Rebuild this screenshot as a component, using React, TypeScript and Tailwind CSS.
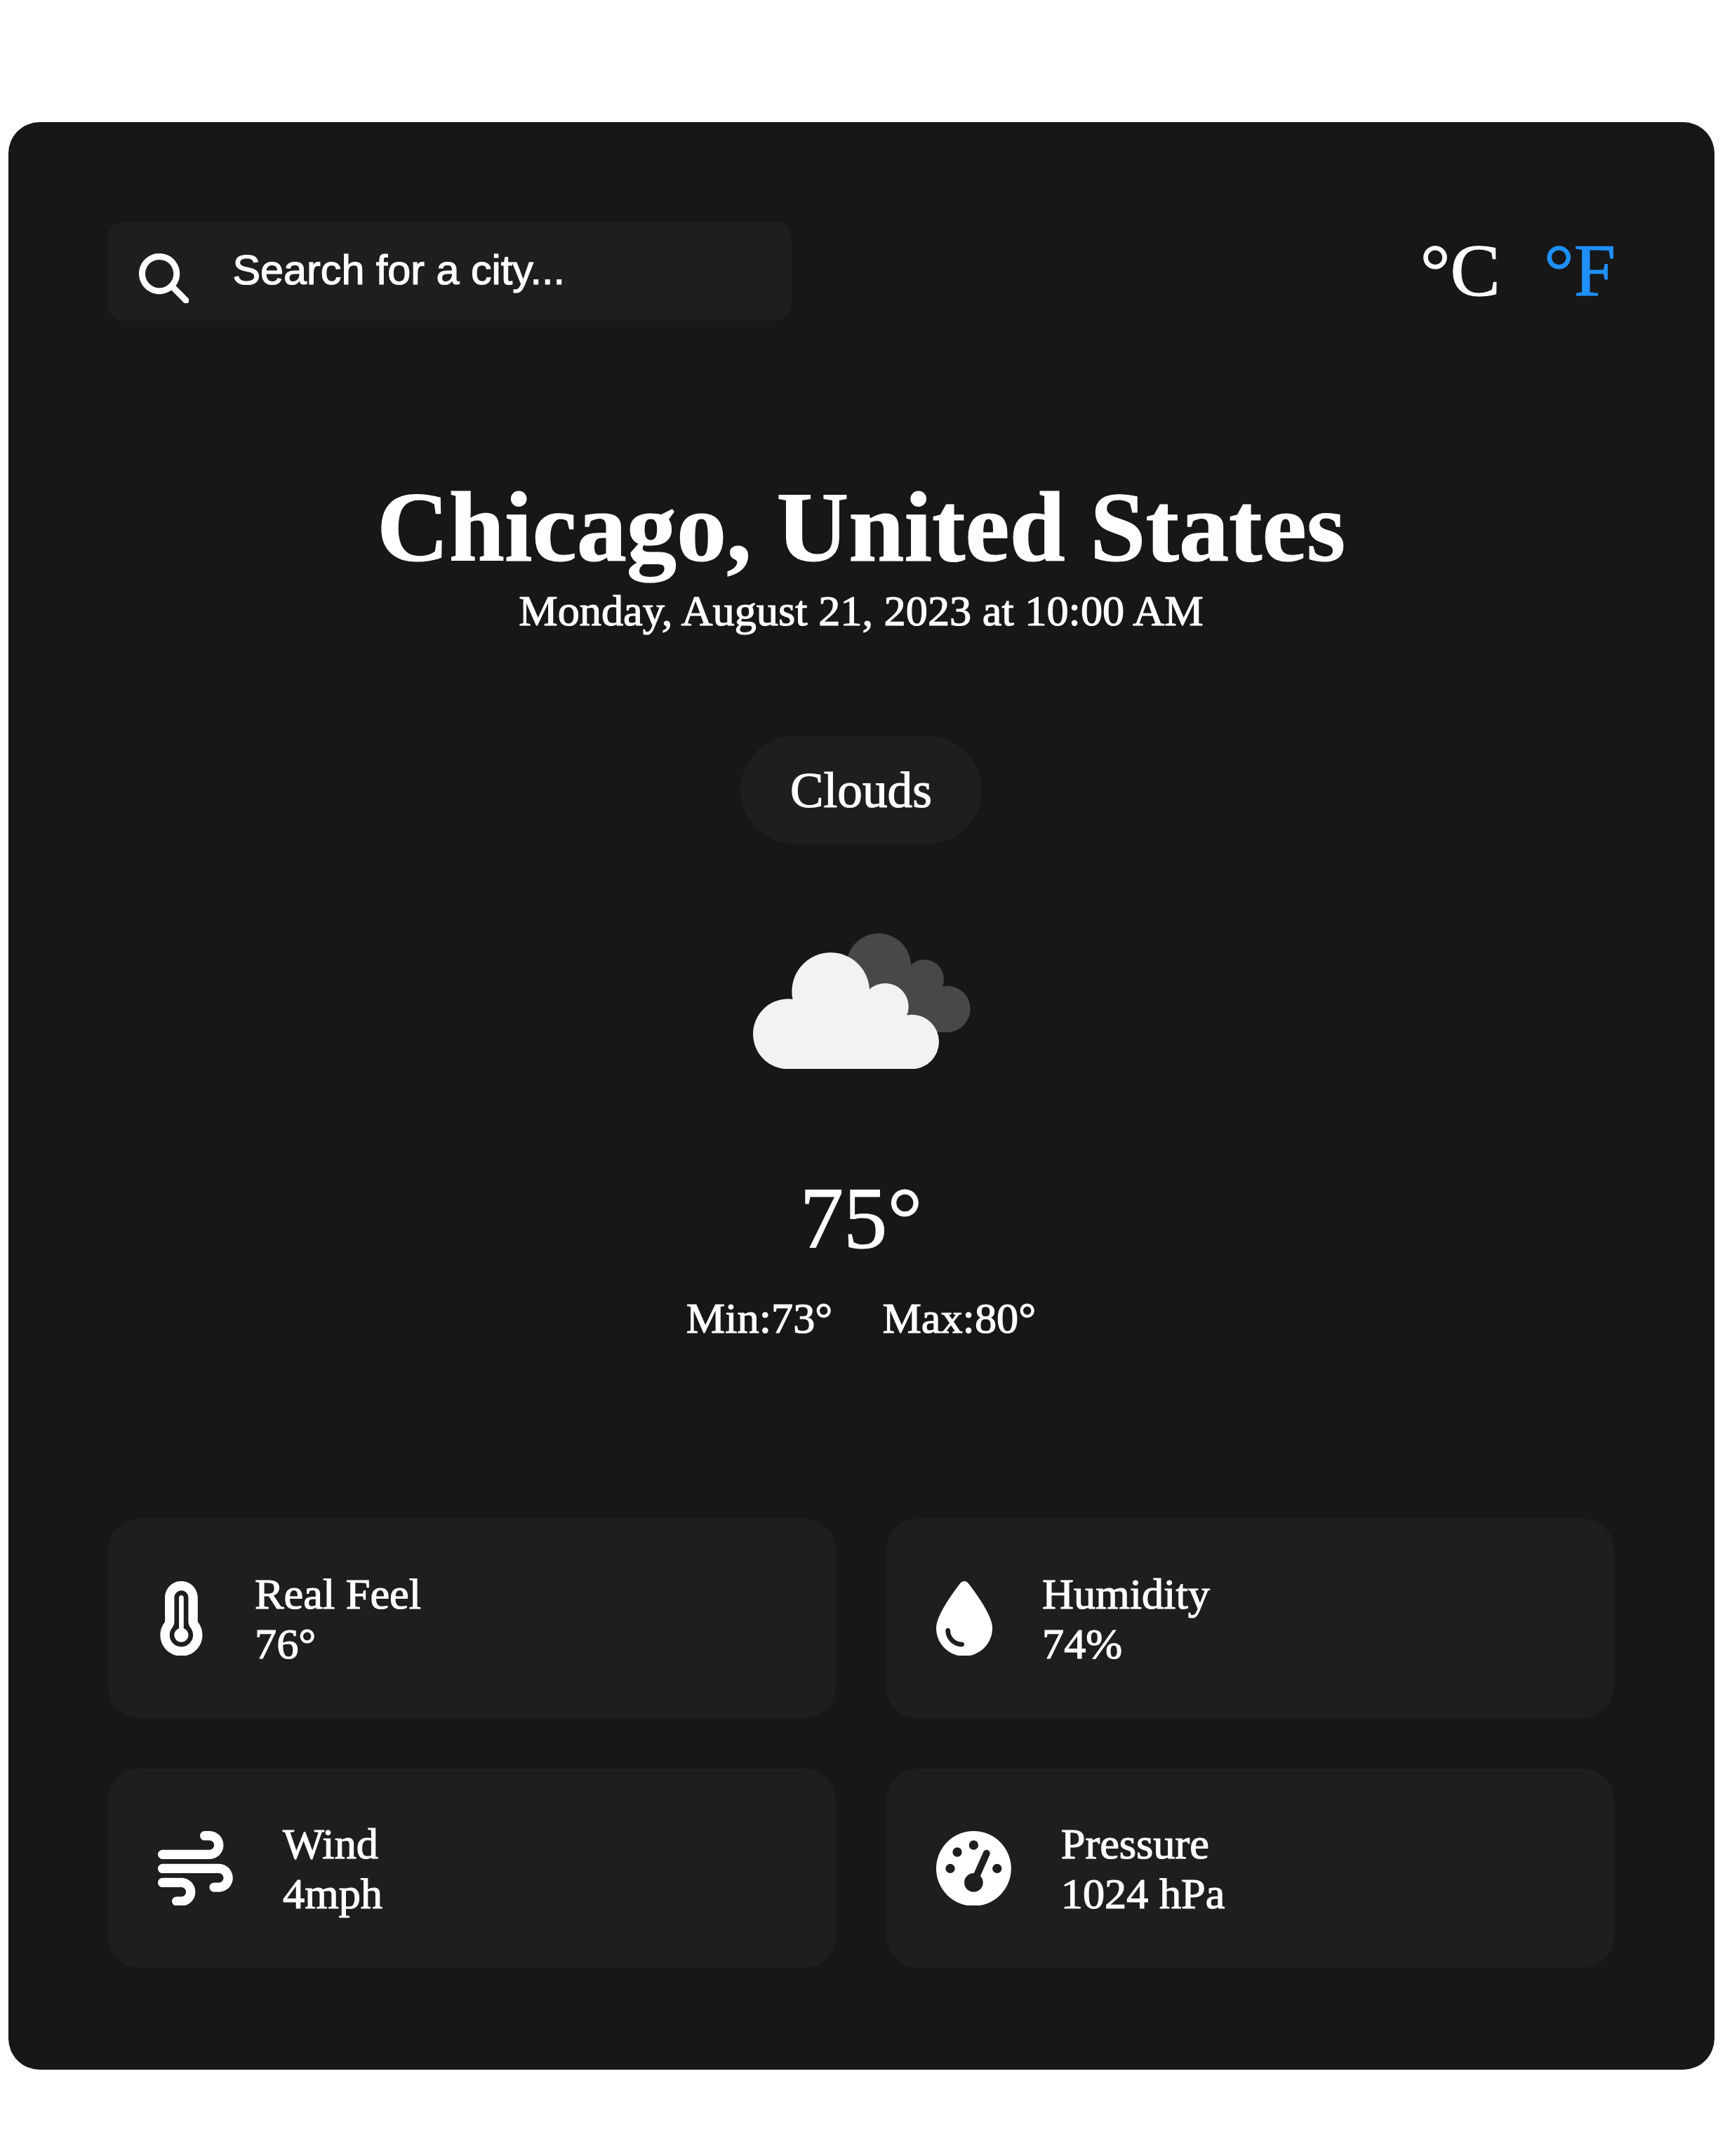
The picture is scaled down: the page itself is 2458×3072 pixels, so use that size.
import type { ReactNode } from "react";
import { FaDroplet, FaGaugeHigh, FaMagnifyingGlass, FaTemperatureFull, FaWind } from "react-icons/fa6";

function CloudIcon() {
  return (
    <svg viewBox="129 900 930 580" className="mx-auto mt-[127.3px] block h-[193.3px] w-[310px] translate-x-[1px]">
      <g fill="#48484a">
        <circle cx="666" cy="1038" r="138" />
        <circle cx="861" cy="1096" r="84" />
        <circle cx="959" cy="1223" r="99" />
        <path d="M666 1038H804L861 1096L942 1127L959 1322H666Z" />
      </g>
      <g fill="#f2f2f2">
        <circle cx="461" cy="1148" r="166" />
        <circle cx="279" cy="1330" r="150" />
        <circle cx="694" cy="1213" r="100" />
        <circle cx="807.5" cy="1363.5" r="116.5" />
        <path d="M279 1330L461 1148H627L694 1213L787 1250L807 1364V1480H279Z" />
      </g>
    </svg>
  );
}

type StatProps = { icon: ReactNode; label: string; value: string };

function Stat({ icon, label, value }: StatProps) {
  return (
    <div className="flex h-[284.8px] items-center gap-[71.2px] rounded-[44.5px] bg-[#1e1e1e] px-[71.2px]">
      {icon}
      <div className="text-[62.3px] leading-[71.2px]">
        <p>{label}</p>
        <p>{value}</p>
      </div>
    </div>
  );
}

export default function App() {
  return (
    <div className="min-h-[3072px] w-[2458px] bg-white pt-[174px] font-['Liberation_Serif',serif]">
      <main className="ml-[11.5px] h-[2774.5px] w-[2431px] rounded-[44.5px] bg-[#171717] px-[142.4px] pt-[142.4px] text-white [-webkit-text-stroke:1.2px_currentColor]">
        <header className="flex h-[140.2px] justify-between">
          <div className="flex w-[974.2px] items-start rounded-[22px] bg-[#1e1e1e] pl-[44px]">
            <FaMagnifyingGlass className="mt-[44.3px] h-[71.6px] w-[71.6px] shrink-0" />
            <input
              type="text"
              placeholder="Search for a city..."
              className="mt-[33px] ml-[62px] h-[71px] w-[700px] bg-transparent font-['Liberation_Sans',sans-serif] text-[59.3px] leading-[71px] outline-none placeholder:text-white"
            />
          </div>
          <div className="-mr-[2px] flex gap-[62.3px] text-[106.8px] leading-[138px]">
            <span>°C</span>
            <span className="text-[#1e90ff]">°F</span>
          </div>
        </header>

        <section className="mt-[212px] text-center">
          <h1 className="text-[142.4px] leading-[165px] font-bold whitespace-nowrap">Chicago, United States</h1>
          <p className="text-[62.3px] leading-[71px]">Monday, August 21, 2023 at 10:00 AM</p>
          <div className="mx-auto mt-[144.2px] h-[153.7px] w-[343.8px] rounded-full bg-[#1e1e1e] text-[71.2px] leading-[154px]">
            Clouds
          </div>
          <CloudIcon />
          <p className="mt-[141.5px] text-[124.6px] leading-[142px]">75°</p>
          <div className="mt-[35.5px] flex justify-center gap-[71.2px] text-[62.3px] leading-[71px]">
            <span>Min:73°</span>
            <span>Max:80°</span>
          </div>
        </section>

        <section className="mt-[250.5px] grid grid-cols-2 gap-[71.2px]">
          <Stat icon={<FaTemperatureFull className="h-[106.8px] w-[66.8px]" />} label="Real Feel" value="76°" />
          <Stat icon={<FaDroplet className="h-[106.8px] w-[80.1px]" />} label="Humidity" value="74%" />
          <Stat icon={<FaWind className="h-[106.8px] w-[106.8px]" />} label="Wind" value="4mph" />
          <Stat icon={<FaGaugeHigh className="h-[106.8px] w-[106.8px]" />} label="Pressure" value="1024 hPa" />
        </section>
      </main>
    </div>
  );
}
